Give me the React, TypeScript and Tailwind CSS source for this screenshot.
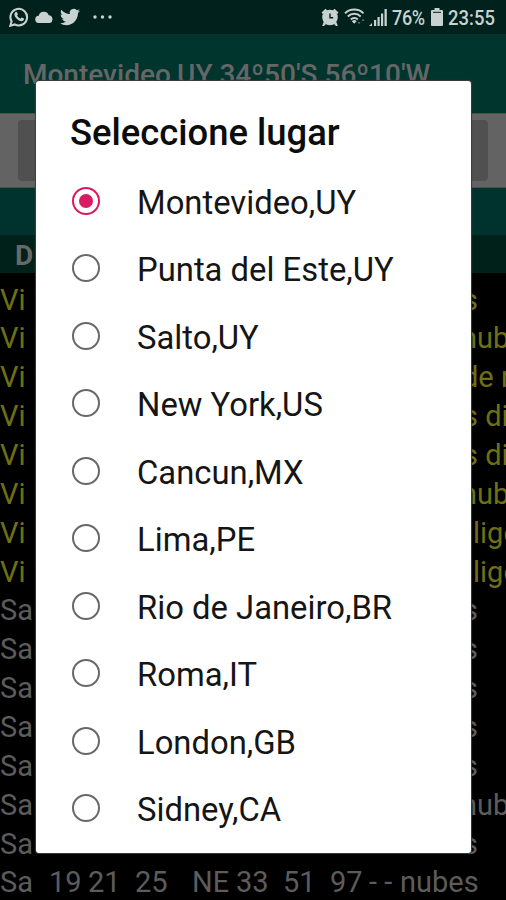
import { useState } from "react"
import clsx from "clsx"

const places = [
  "Montevideo,UY",
  "Punta del Este,UY",
  "Salto,UY",
  "New York,US",
  "Cancun,MX",
  "Lima,PE",
  "Rio de Janeiro,BR",
  "Roma,IT",
  "London,GB",
  "Sidney,CA",
]

const rows = [
  { day: "Vi", sky: "s", indent: "ml-[463px]" },
  { day: "Vi", sky: "nub", indent: "ml-[461px]" },
  { day: "Vi", sky: "de n", indent: "ml-[462px]" },
  { day: "Vi", sky: "s di", indent: "ml-[463px]" },
  { day: "Vi", sky: "s di", indent: "ml-[463px]" },
  { day: "Vi", sky: "nub", indent: "ml-[461px]" },
  { day: "Vi", sky: "lige", indent: "ml-[473px]" },
  { day: "Vi", sky: "lige", indent: "ml-[473px]" },
  { day: "Sa", sky: "s", indent: "ml-[463px]" },
  { day: "Sa", sky: "s", indent: "ml-[463px]" },
  { day: "Sa", sky: "s", indent: "ml-[463px]" },
  { day: "Sa", sky: "s", indent: "ml-[463px]" },
  { day: "Sa", sky: "s", indent: "ml-[463px]" },
  { day: "Sa", sky: "nub", indent: "ml-[461px]" },
  { day: "Sa", sky: "s", indent: "ml-[463px]" },
]

function StatusBar() {
  return (
    <div className="flex h-[34px] items-center bg-[#00211c] pl-[9px] pr-[11px] text-[#c8d2d0]">
      <svg className="h-5 w-5 shrink-0" viewBox="0 0 20 20" fill="none" stroke="currentColor">
        <path d="M1.300 18.700l1.300-4.400A8.300 8.300 0 1 1 5.800 17.400z" strokeWidth="2.100" />
        <path
          d="M6.400 5.200c.7-.6 1.300-.5 1.700.2l.8 1.800c0 .6-.5 1-.8 1.400.8 1.500 1.900 2.500 3.400 3.100.5-.4.9-1.200 1.400-1.100l2 1c.5.5-.2 1.800-.9 2.200-1.500.9-3.700.1-5.400-1.300C6.800 11 5.400 9 5.400 7.200c0-.8.4-1.500 1-2z"
          fill="currentColor"
          stroke="none"
        />
      </svg>
      <svg className="ml-[6px] h-3 w-[19px] shrink-0" viewBox="0 0 19 12" fill="currentColor">
        <path d="M4 12a3.600 3.600 0 0 1-.3-7.200A5.300 5.300 0 0 1 13.800 4.300 4 4 0 0 1 15 12z" />
      </svg>
      <svg className="ml-[6px] h-5 w-5 shrink-0" viewBox="0 0 24 24" fill="currentColor">
        <path d="M23.950 4.570a10 10 0 0 1-2.820.770 4.960 4.960 0 0 0 2.160-2.720c-.950.550-2 .950-3.130 1.180a4.920 4.920 0 0 0-8.380 4.480C7.690 8.090 4.070 6.130 1.640 3.160a4.820 4.820 0 0 0-.670 2.480c0 1.710.870 3.210 2.190 4.100a4.900 4.900 0 0 1-2.230-.620v.060a4.920 4.920 0 0 0 3.950 4.830 5 5 0 0 1-2.210.080 4.940 4.940 0 0 0 4.600 3.420A9.870 9.870 0 0 1 0 19.540a14 14 0 0 0 7.550 2.210c9.050 0 14-7.500 14-13.990 0-.210 0-.420-.020-.630a9.940 9.940 0 0 0 2.460-2.550z" />
      </svg>
      <svg className="ml-[13px] h-1 w-[19px] shrink-0" viewBox="0 0 19 4" fill="currentColor">
        <circle cx="2" cy="2" r="1.700" />
        <circle cx="9.500" cy="2" r="1.700" />
        <circle cx="17" cy="2" r="1.700" />
      </svg>

      <svg className="ml-auto h-[18px] w-[18px] shrink-0" viewBox="0 0 18 18" fill="currentColor">
        <circle cx="9" cy="9.500" r="7.800" />
        <path d="M.500 4.500 4.500.800l1.800 1.700L2 6.200zM17.500 4.500 13.500.800l-1.800 1.700L16 6.200zM3 13l2 3-2 2H1.200zM15 13l-2 3 2 2h1.800z" />
        <path d="M9 5.500v4.300h3.200" fill="none" stroke="#00211c" strokeWidth="1.400" />
      </svg>
      <svg className="ml-[5px] h-[18px] w-[22px] shrink-0" viewBox="0 0 22 18" fill="none" stroke="currentColor" strokeWidth="1.900">
        <path d="M1 5.300c5-5 13.500-5 18.500 0M3.800 8.500c3.700-3.700 9.200-3.700 12.900 0M6.800 11.500c2-2 5-2 7 0" />
        <path d="m7.800 13.200 2.400 2.600 2.400-2.600a3.500 3.500 0 0 0-4.800 0z" fill="currentColor" stroke="none" />
        <path d="m13.500 14 1.500 2.500 1.500-2.500zM17.500 13 19 10.500l1.500 2.500z" fill="#4a6b66" stroke="none" />
      </svg>
      <svg className="ml-[3px] h-[17px] w-[18px] shrink-0" viewBox="0 0 18 17" fill="currentColor">
        <path d="M0 17l3-3v3zM5 11h2.200v6H5zM8.500 8h2.200v9H8.500zM12 4.500h2.200V17H12zM15.500 0h2.300v17h-2.300z" />
      </svg>
      <span className="ml-[5px] flex w-[34px] pt-[2px]">
        <span className="origin-left scale-x-[0.860] whitespace-nowrap text-[21px] font-medium leading-none tracking-[-0.400px]">76%</span>
      </span>
      <svg className="ml-[5px] h-[18px] w-3 shrink-0" viewBox="0 0 12 18" fill="currentColor">
        <path d="M3.500 0h5v2H11a1 1 0 0 1 1 1v14a1 1 0 0 1-1 1H1a1 1 0 0 1-1-1V3a1 1 0 0 1 1-1h2.500z" />
        <path d="M2 4.300h8" stroke="#00211c" />
      </svg>
      <span className="ml-[5px] flex w-[47px] pt-[2px]">
        <span className="origin-left scale-x-[0.880] whitespace-nowrap text-[21px] font-medium leading-none">23:55</span>
      </span>
    </div>
  )
}

function Forecast() {
  return (
    <div className="text-[29px] leading-[38.87px]">
      {rows.map((row, i) => (
        <div
          key={i}
          className={clsx(
            "grid h-[38.87px] overflow-hidden whitespace-pre",
            row.day === "Vi" ? "text-[#6e7014]" : "text-[#5c5c5c]",
          )}
        >
          <span className="col-start-1 row-start-1">{row.day}</span>
          <span className={clsx("col-start-1 row-start-1", row.indent)}>{row.sky}</span>
        </div>
      ))}
      <div className="flex h-[38.87px] whitespace-pre text-[#5c5c5c]">
        <span className="w-[49px]">Sa</span>
        <span className="w-[39px]">19</span>
        <span className="w-[47px]">21</span>
        <span className="w-[57px]">25</span>
        <span className="w-[44px]">NE</span>
        <span className="w-[47px]">33</span>
        <span className="w-[47px]">51</span>
        <span className="w-[39px]">97</span>
        <span className="w-[31px]">- -</span>
        <span>nubes</span>
      </div>
    </div>
  )
}

export default function App() {
  const [selected, setSelected] = useState(0)

  return (
    <div className="relative h-[900px] w-[506px] overflow-hidden bg-black font-['Roboto',sans-serif]">
      <StatusBar />

      {/* App bar */}
      <div className="h-[79px] bg-[#00352e] pl-[23px] pt-[25px]">
        <h1 className="whitespace-nowrap text-[28px] font-medium leading-[32px] text-[#666666]">
          Montevideo,UY 34º50'S 56º10'W
        </h1>
      </div>

      {/* Place selector behind the dialog */}
      <div className="h-[75px] border-y border-[#4e4e4e] bg-[#636363] px-[18px] py-[6px]">
        <div className="h-full rounded-sm bg-[#505050]" />
      </div>

      <div className="h-[47px] bg-[#00332d]" />
      <div className="h-[38px] bg-[#00211a] pl-[15px] text-[28px] font-bold leading-[41px] text-[#686868]">D</div>

      <div className="pt-[7.500px]">
        <Forecast />
      </div>

      {/* Dialog */}
      <div className="absolute left-[36px] top-[81px] h-[772px] w-[435px] rounded-[3px] bg-white shadow-[0_0_1px_1px_#3c3c3c]">
        <h2 className="pl-[34px] pt-[30px] text-[36.400px] font-medium leading-[44px] text-[#0c0c0c]">Seleccione lugar</h2>
        <div className="mt-[12px]" role="radiogroup">
          {places.map((place, i) => (
            <button
              key={place}
              role="radio"
              aria-checked={selected === i}
              onClick={() => setSelected(i)}
              className="flex h-[67.500px] w-full items-center pl-[36px] text-left"
            >
              <span
                className={clsx(
                  "flex h-7 w-7 shrink-0 items-center justify-center rounded-full border-[2.500px]",
                  selected === i ? "border-[#d81b60]" : "border-[#686868]",
                )}
              >
                {selected === i && <span className="h-[14px] w-[14px] rounded-full bg-[#d81b60]" />}
              </span>
              <span className="ml-[37px] mt-[4px] whitespace-nowrap text-[32.800px] leading-[38px] text-[#151515]">{place}</span>
            </button>
          ))}
        </div>
      </div>
    </div>
  )
}
